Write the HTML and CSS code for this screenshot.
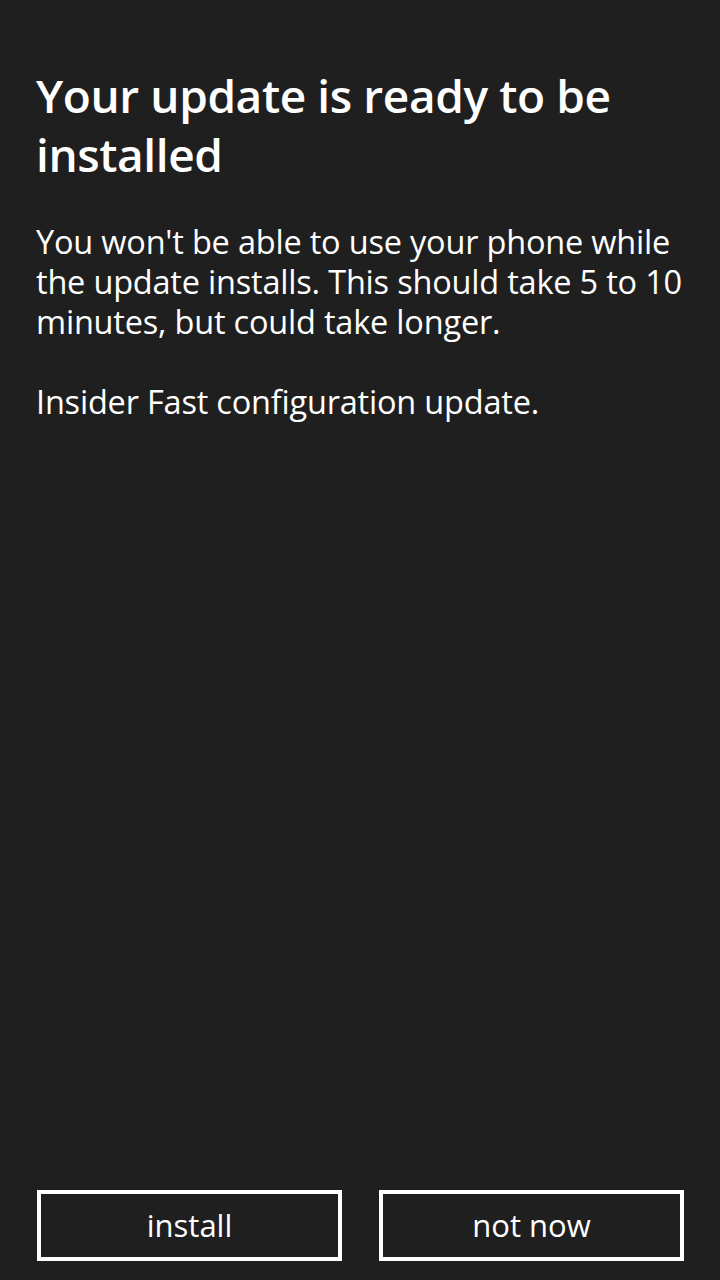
FILE: index.html
```html
<!DOCTYPE html>
<html lang="en">
<head>
<meta charset="utf-8">
<title>Update</title>
<link rel="stylesheet" href="styles.css">
</head>
<body>
<main class="screen">
  <section class="content">
    <h1 class="title">Your update is ready to be installed</h1>
    <p class="text">You won't be able to use your phone while the update installs. This should take 5 to 10 minutes, but could take longer.</p>
    <p class="text">Insider Fast configuration update.</p>
  </section>
  <footer class="actions">
    <button class="btn">install</button>
    <button class="btn">not now</button>
  </footer>
</main>
</body>
</html>
```

FILE: styles.css
```css
html, body {
  margin: 0;
  padding: 0;
  background: #1f1f1f;
}
.screen {
  width: 720px;
  height: 1280px;
  box-sizing: border-box;
  display: flex;
  flex-direction: column;
  justify-content: space-between;
  padding: 0 36px 19px 34px;
  font-family: "Open Sans", "Noto Sans", sans-serif;
  color: #ffffff;
}
.content {
  padding-top: 66px;
}
.title {
  margin: 0 0 38px 2px;
  font-size: 46px;
  font-weight: 600;
  line-height: 59px;
  letter-spacing: -0.4px;
}
.text {
  margin: 0 -8px 40px 2px;
  font-size: 32.5px;
  font-weight: 400;
  line-height: 40px;
  letter-spacing: -0.2px;
}
.actions {
  display: grid;
  grid-template-columns: 1fr 1fr;
  gap: 37px;
  padding-left: 3px;
}
.btn {
  height: 71px;
  background: transparent;
  border: 4px solid #ffffff;
  color: #ffffff;
  font-family: "Open Sans", "Noto Sans", sans-serif;
  font-size: 31px;
  font-weight: 500;
  padding: 0 0 2px 0;
}
```
